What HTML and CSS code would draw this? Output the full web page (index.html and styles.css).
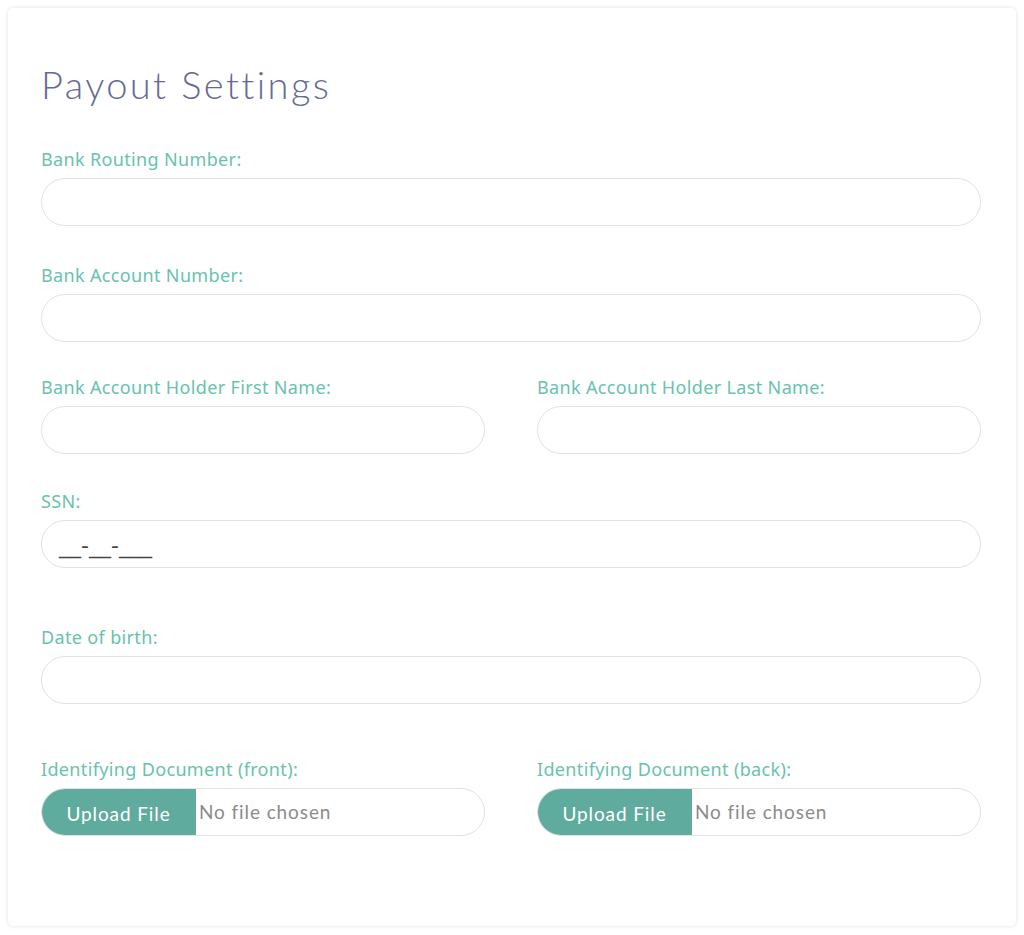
FILE: index.html
```html
<!DOCTYPE html>
<html lang="en">
<head>
<meta charset="utf-8">
<title>Payout Settings</title>
<link rel="stylesheet" href="styles.css">
</head>
<body>
<div class="card">
  <h1 class="title">Payout Settings</h1>

  <div class="group g-routing">
    <label class="label">Bank Routing Number:</label>
    <div class="input"></div>
  </div>

  <div class="group g-account">
    <label class="label">Bank Account Number:</label>
    <div class="input"></div>
  </div>

  <div class="row g-names">
    <div class="col">
      <label class="label">Bank Account Holder First Name:</label>
      <div class="input"></div>
    </div>
    <div class="col">
      <label class="label">Bank Account Holder Last Name:</label>
      <div class="input"></div>
    </div>
  </div>

  <div class="group g-ssn">
    <label class="label">SSN:</label>
    <div class="input"><span class="mask">__-__-___</span></div>
  </div>

  <div class="group g-dob">
    <label class="label">Date of birth:</label>
    <div class="input"></div>
  </div>

  <div class="row g-docs">
    <div class="col">
      <label class="label">Identifying Document (front):</label>
      <div class="file">
        <span class="file-btn">Upload File</span>
        <span class="file-name">No file chosen</span>
      </div>
    </div>
    <div class="col">
      <label class="label">Identifying Document (back):</label>
      <div class="file">
        <span class="file-btn">Upload File</span>
        <span class="file-name">No file chosen</span>
      </div>
    </div>
  </div>
</div>
</body>
</html>
```

FILE: styles.css
```css
* { box-sizing: border-box; }

html, body {
  margin: 0;
  padding: 0;
  background: #ffffff;
}

body {
  padding: 8px;
  font-family: "Noto Sans", "Open Sans", sans-serif;
}

.card {
  width: 1008px;
  height: 918px;
  background: #ffffff;
  border-radius: 5px;
  box-shadow: 0 0 4px rgba(0, 0, 0, 0.12);
  padding: 54px 35px 0 33px;
  display: flex;
  flex-direction: column;
}

.title {
  margin: 0;
  font-family: Lato, "Open Sans", sans-serif;
  font-weight: 300;
  font-size: 38px;
  line-height: 44px;
  color: #656a94;
  letter-spacing: 2.4px;
}

.label {
  display: block;
  font-family: "Noto Sans", sans-serif;
  font-size: 18px;
  line-height: 22px;
  color: #68c2ad;
  margin-bottom: 8px;
  letter-spacing: 0.35px;
}

.input {
  height: 48px;
  border: 1px solid #e2e2e2;
  border-radius: 24px;
  background: #ffffff;
  display: flex;
  align-items: center;
  padding-left: 17px;
}

.mask {
  font-family: "DejaVu Sans", sans-serif;
  font-size: 22px;
  color: #444;
  padding-top: 2px;
}

.g-routing { margin-top: 42px; }
.g-account { margin-top: 38px; }
.g-names { margin-top: 34px; }
.g-ssn { margin-top: 36px; }
.g-dob { margin-top: 58px; }
.g-docs { margin-top: 54px; }

.row {
  display: grid;
  grid-template-columns: 1fr 1fr;
  column-gap: 52px;
}

.file {
  height: 48px;
  border: 1px solid #e2e2e2;
  border-radius: 24px;
  overflow: hidden;
  display: flex;
  align-items: center;
}

.file-btn {
  width: 155px;
  height: 48px;
  margin: -1px 0 -1px -1px;
  background: #5fab9e;
  color: #ffffff;
  font-family: Lato, "Open Sans", sans-serif;
  font-size: 19px;
  display: flex;
  align-items: center;
  justify-content: center;
  padding-top: 2px;
  letter-spacing: 0.9px;
}

.file-name {
  padding-left: 3px;
  font-family: Lato, "Open Sans", sans-serif;
  font-size: 19px;
  color: #8b8b8b;
  padding-bottom: 2px;
  letter-spacing: 0.9px;
}
```
